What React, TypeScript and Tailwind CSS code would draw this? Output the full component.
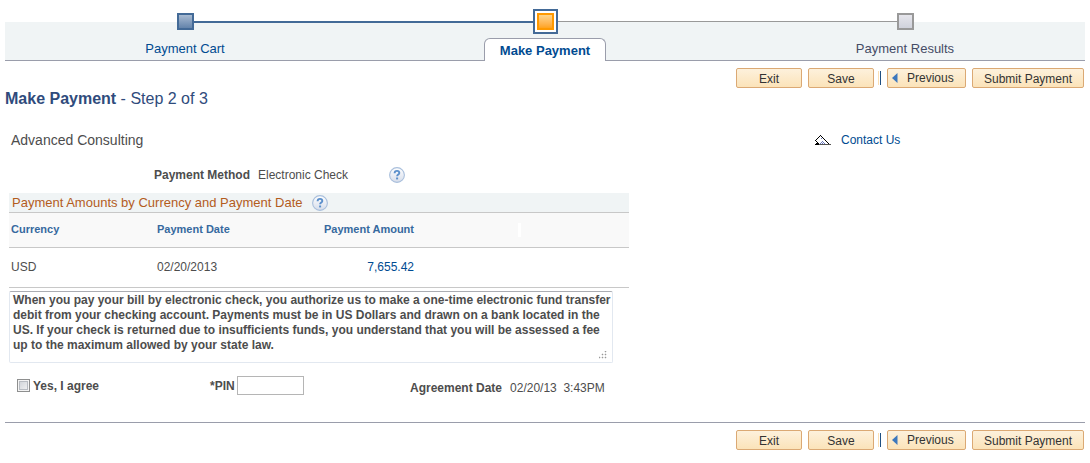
import { useState } from 'react';

const TERMS = [
  'When you pay your bill by electronic check, you authorize us to make a one-time electronic fund transfer',
  'debit from your checking account. Payments must be in US Dollars and drawn on a bank located in the',
  'US. If your check is returned due to insufficients funds, you understand that you will be assessed a fee',
  'up to the maximum allowed by your state law.',
].join('\n');

const PAYMENTS = [{ currency: 'USD', date: '02/20/2013', amount: '7,655.42' }];

const BTN = 'h-5 rounded-xs border border-[#dba974] bg-linear-to-b from-[#fdf1dc] to-[#fbe3b9] text-center text-xs leading-5 text-[#333333] hover:to-[#f8d79c]';

function HelpIcon({ label }: { label: string }) {
  return (
    <button type="button" aria-label={label} className="block">
      <svg width="16" height="16" viewBox="0 0 16 16">
        <defs>
          <linearGradient id="help" x1="0" y1="0" x2="0" y2="1">
            <stop offset="0" stopColor="#ffffff" />
            <stop offset="1" stopColor="#d5dcea" />
          </linearGradient>
        </defs>
        <circle cx="8" cy="8" r="7.4" fill="url(#help)" stroke="#a9bfdc" strokeWidth="1.1" />
        <path d="M5.6 6.3c0-1.6 1-2.4 2.4-2.4s2.3.8 2.3 2c0 1.6-2.2 1.7-2.2 3.4" fill="none" stroke="#5b8fcb" strokeWidth="1.9" />
        <path d="M7.1 10.5h2v1.9h-2z" fill="#5b8fcb" />
      </svg>
    </button>
  );
}

function EnvelopeIcon() {
  return (
    <svg width="16" height="10" viewBox="0 0 16 10" shapeRendering="crispEdges">
      <path
        d="M0 5h1v1H0zM1 4h1v1H1zM2 3h1v1H2zM3 2h1v1H3zM4 1h1v1H4zM5 0h1v1H5zM6 1h1v1H6zM7 2h1v1H7zM8 3h1v1H8zM9 4h1v1H9zM10 5h1v1h-1zM11 6h1v1h-1zM12 7h1v1h-1zM13 8h1v1h-1zM1 6h1v1H1zM2 7h1v1H2zM1 8h3v1H1zM0 9h4v1H0z"
        fill="#000000"
      />
      <path d="M4 9h12v1H4z" fill="#555555" />
      <path d="M6 3h1v1H6zM7 6h1v1H7zM6 7h1v1H6zM8 7h1v1H8zM5 8h1v1H5zM7 8h1v1H7zM9 8h1v1H9z" fill="#6677bb" />
    </svg>
  );
}

function Actions() {
  return (
    <div className="flex items-center justify-end pr-px">
      <button type="button" className={`${BTN} w-[66px]`}>Exit</button>
      <button type="button" className={`${BTN} ml-1.5 w-[66px]`}>Save</button>
      <span className="mr-1.5 ml-1 h-3.5 w-[3px] border-r border-l border-r-[#1f4f82] border-l-[#fbdfb4]" />
      <button type="button" className={`${BTN} flex w-[79px] items-center gap-[9px] pl-1`}>
        <svg width="6" height="10" viewBox="0 0 6 10">
          <path d="M5.5 0v10L0 5z" fill="#3d78bd" />
        </svg>
        Previous
      </button>
      <button type="button" className={`${BTN} ml-1.5 w-[112px]`}>Submit Payment</button>
    </div>
  );
}

function Stepper() {
  return (
    <nav className="bg-[linear-gradient(to_bottom,transparent_22px,#f0f4f5_22px)]">
      <ol className="grid grid-cols-3 border-b border-[#9a9dab] pt-[9px] text-[13px]">
        <li>
          <div className="flex h-[25px] items-center">
            <span className="flex-1" />
            <span className="size-[17px] border-2 border-[#436a97] bg-linear-to-b from-[#a9bbd2] to-[#6484ab]" />
            <span className="mt-3 h-0.5 flex-1 self-start bg-[#436a97]" />
          </div>
          <a href="#cart" className="mt-1 block text-center leading-[22px] text-[#004b91]">Payment Cart</a>
        </li>
        <li>
          <div className="flex h-[25px] items-center">
            <span className="mt-3 h-0.5 flex-1 self-start bg-[#436a97]" />
            <span className="size-[25px] border-2 border-[#436a97] bg-white p-0.5">
              <span className="block size-full border-2 border-[#ff9900] bg-linear-to-b from-[#ffd58a] to-[#ffa31a]" />
            </span>
            <span className="mt-3 h-px flex-1 self-start bg-[#999999]" />
          </div>
          <a href="#payment" aria-current="step" className="mx-auto mt-1 -mb-px block h-[23px] w-[122px] rounded-t-md border border-b-0 border-[#9a9dab] bg-white text-center leading-6 font-bold text-[#004b91]">
            Make Payment
          </a>
        </li>
        <li>
          <div className="flex h-[25px] items-center">
            <span className="mt-3 h-px flex-1 self-start bg-[#999999]" />
            <span className="size-[17px] border-2 border-[#999999] bg-linear-to-b from-[#e6e6ec] to-[#d0d2dc]" />
            <span className="flex-1" />
          </div>
          <span className="mt-1 block text-center leading-[22px] text-[#454c66]">Payment Results</span>
        </li>
      </ol>
    </nav>
  );
}

export default function App() {
  const [terms, setTerms] = useState(TERMS);
  const [agree, setAgree] = useState(false);
  const [pin, setPin] = useState('');

  return (
    <main className="bg-white px-[5px] pb-3 font-['Liberation_Sans',Arial,sans-serif] text-xs text-[#4d4d4d]">
      <Stepper />
      <div className="pt-[7px]">
        <Actions />
      </div>

      <h1 className="text-base leading-[22px] text-[#2f4b7c]"><b>Make Payment</b> - Step 2 of 3</h1>

      <div className="mt-5 grid grid-cols-4">
        <h2 className="col-span-3 pl-1.5 text-sm leading-5">Advanced Consulting</h2>
        <a href="#contact" className="flex items-center gap-2.5 leading-[18px] text-[#004b91]">
          <EnvelopeIcon />
          Contact Us
        </a>
      </div>

      <div className="mt-[15px] flex h-5 items-center">
        <span className="w-[245px] text-right font-bold">Payment Method</span>
        <span className="w-[139px] pl-2">Electronic Check</span>
        <HelpIcon label="Payment method help" />
      </div>

      <section className="mt-2 ml-1 max-w-[620px]">
        <div className="flex h-5 items-center gap-2.5 border-b border-[#c8c8c8] bg-[#f0f4f5] pl-[3px]">
          <h3 className="text-[13px] leading-4 text-[#b35c1e]">Payment Amounts by Currency and Payment Date</h3>
          <HelpIcon label="Payment amounts help" />
        </div>
        <table className="w-full table-fixed">
          <thead>
            <tr className="h-[34px] border-b border-[#c8c8c8] bg-[#f9f9f9] text-left text-[11px] text-[#36699f]">
              <th className="w-[146px] pl-0.5">Currency</th>
              <th className="w-[146px] pl-0.5">Payment Date</th>
              <th className="w-[115px] pr-0.5 text-right">Payment Amount</th>
              <td><span className="ml-[102px] block h-3.5 w-[3px] bg-white" /></td>
            </tr>
          </thead>
          <tbody>
            {PAYMENTS.map(p => (
              <tr key={p.currency} className="h-10 border-b border-[#c8c8c8]">
                <td className="pl-0.5">{p.currency}</td>
                <td className="pl-0.5">{p.date}</td>
                <td className="pr-0.5 text-right"><a href="#amount" className="text-[#004b91]">{p.amount}</a></td>
                <td />
              </tr>
            ))}
          </tbody>
        </table>

        <div className="relative mt-[3px] max-w-[604px]">
          <textarea
            aria-label="Payment terms"
            wrap="off"
            value={terms}
            onChange={e => setTerms(e.target.value)}
            className="block h-[72px] w-full resize-none overflow-hidden rounded-xs border border-[#e2e8f0] border-t-[#abadb3] py-px pl-[3px] leading-[15px] font-bold"
          />
          <svg width="8" height="8" viewBox="0 0 8 8" className="pointer-events-none absolute right-1.5 bottom-1">
            <path d="M6 0h1v1H6zM3 3h1v1H3zM6 3h1v1H6zM0 6h1v1H0zM3 6h1v1H3zM6 6h1v1H6z" fill="#999999" stroke="#999999" strokeWidth=".5" />
          </svg>
        </div>

        <div className="mt-[13px] flex items-start pl-2">
          <label className="flex w-[193px] items-center gap-[3px] leading-5 font-bold">
            <input
              type="checkbox"
              checked={agree}
              onChange={e => setAgree(e.target.checked)}
              className="size-[13px] appearance-none border border-[#8e8f8f] bg-linear-to-br from-[#cbcfd5] to-[#f6f6f6] shadow-[inset_0_0_0_1px_#f4f4f4,inset_0_0_0_2px_#b8bcc2] checked:bg-[#36699f] checked:bg-none"
            />
            Yes, I agree
          </label>
          <label className="flex w-[200px] items-center gap-0.5 leading-5 font-bold">
            *PIN
            <input type="password" value={pin} onChange={e => setPin(e.target.value)} className="h-[19px] w-[67px] border border-[#b5b5b5] px-1" />
          </label>
          <span className="leading-6 font-bold">Agreement Date</span>
          <span className="pl-2 leading-6 whitespace-pre">02/20/13  3:43PM</span>
        </div>
      </section>

      <footer className="mt-[22px] border-t border-[#9a9dab] pt-[7px]">
        <Actions />
      </footer>
    </main>
  );
}
